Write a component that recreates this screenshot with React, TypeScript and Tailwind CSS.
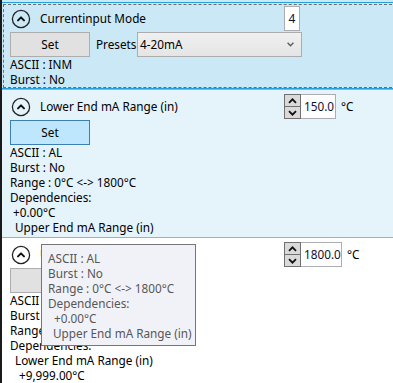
import React from 'react';

// Expand / collapse glyph (circle with up chevron)
function ExpandIcon() {
  return (
    <svg width="20" height="20" viewBox="0 0 20 20" className="shrink-0">
      <circle cx="10" cy="10" r="8.6" fill="none" stroke="#222" strokeWidth="1.3" />
      <path
        d="M7 11.4 L10 8.4 L13 11.4"
        fill="none"
        stroke="#111"
        strokeWidth="2"
        strokeLinecap="round"
        strokeLinejoin="round"
      />
    </svg>
  );
}

function SpinArrow({ up }: { up: boolean }) {
  return (
    <svg width="9" height="6" viewBox="0 0 9 6">
      <path
        d={up ? 'M1 4.8 L4.5 1.3 L8 4.8' : 'M1 1.2 L4.5 4.7 L8 1.2'}
        fill="none"
        stroke="#111"
        strokeWidth="1.8"
      />
    </svg>
  );
}

function SpinBox({ value, boxClass }: { value: string; boxClass: string }) {
  return (
    <div className={`flex h-[25px] border-y border-r border-[#abadb3] bg-white ${boxClass}`}>
      <div className="flex flex-col w-[17px] shrink-0 -my-px">
        <div className="h-[13px] flex items-center justify-center bg-[#dadada] border border-[#707070]">
          <SpinArrow up />
        </div>
        <div className="h-[12px] flex items-center justify-center bg-[#dadada] border border-t-0 border-[#707070]">
          <SpinArrow up={false} />
        </div>
      </div>
      <div className="pl-[3px] flex items-center text-[#101030]">{value}</div>
    </div>
  );
}

function Header({ title, children }: { title: string; children: React.ReactNode }) {
  return (
    <div className="flex items-center h-[25px] pl-[9px]">
      <ExpandIcon />
      <div className="ml-[9px] w-[244px] shrink-0 whitespace-nowrap">{title}</div>
      {children}
    </div>
  );
}

function SetButton({ hover }: { hover?: boolean }) {
  return (
    <button
      className={`w-[80px] h-[25px] shrink-0 border text-black ${
        hover ? 'bg-[#bee6fd] border-[#3c7fb1]' : 'bg-[#e1e1e1] border-[#adadad]'
      }`}
    >
      Set
    </button>
  );
}

export default function App() {
  return (
    <div className="relative w-[393px] h-[383px] overflow-hidden bg-white border-l-2 border-[#1a1a1a] font-['Noto_Sans',sans-serif] text-[11.75px] leading-[15px] text-black">
      <div className="h-[2px] bg-[#cbe8f6]" />

      {/* Selected item */}
      <div className="relative h-[87px] bg-[#cbe8f6] border-y border-[#26a0da]">
        <div className="mt-[3px]">
          <Header title="Currentinput Mode">
            <div className="w-[16px] h-[25px] border border-[#abadb3] bg-white flex items-center justify-center text-[12px] text-[#101030]">
              4
            </div>
          </Header>
        </div>
        <div className="mt-px flex items-center pl-[8px]">
          <SetButton />
          <span className="ml-[6px] w-[41px] shrink-0 whitespace-nowrap">Presets</span>
          <div className="w-[165px] h-[25px] flex items-center justify-between border border-[#acacac] bg-linear-to-b from-[#f0f0f0] to-[#e5e5e5] pl-[2px] pr-[7px]">
            <span>4-20mA</span>
            <svg width="7" height="5" viewBox="0 0 7 5">
              <path d="M0.6 0.8 L3.5 3.8 L6.4 0.8" fill="none" stroke="#5a5a5a" strokeWidth="1.3" />
            </svg>
          </div>
        </div>
        <div className="pl-[8px]">
          <div>ASCII : INM</div>
          <div>Burst : No</div>
        </div>
        {/* focus rectangle */}
        <div className="pointer-events-none absolute left-[1px] top-[1px] bottom-0 -right-[4px] border border-dashed border-[#6d6d6d]" />
      </div>

      {/* Hovered item */}
      <div className="h-[149px] bg-[#e5f3fb] border-y border-[#70c0e7]">
        <div className="mt-[4px]">
          <Header title="Lower End mA Range (in)">
            <SpinBox value="150.0" boxClass="w-[52px]" />
            <span className="ml-[5px]">°C</span>
          </Header>
        </div>
        <div className="mt-px pl-[8px]">
          <SetButton hover />
        </div>
        <div>
          <div className="pl-[8px]">ASCII : AL</div>
          <div className="pl-[8px]">Burst : No</div>
          <div className="pl-[8px]">Range : 0°C &lt;-&gt; 1800°C</div>
          <div className="pl-[8px]">Dependencies:</div>
          <div className="pl-[11px]">+0.00°C</div>
          <div className="pl-[13px]">Upper End mA Range (in)</div>
        </div>
      </div>

      {/* Plain item */}
      <div>
        <div className="mt-[4px]">
          <Header title="Upper End mA Range (in)">
            <SpinBox value="1800.0" boxClass="w-[58px]" />
            <span className="ml-[5px]">°C</span>
          </Header>
        </div>
        <div className="mt-px pl-[8px]">
          <SetButton />
        </div>
        <div>
          <div className="pl-[8px]">ASCII : AL</div>
          <div className="pl-[8px]">Burst : No</div>
          <div className="pl-[8px]">Range : 0°C &lt;-&gt; 1800°C</div>
          <div className="pl-[8px]">Dependencies:</div>
          <div className="pl-[13px]">Lower End mA Range (in)</div>
          <div className="pl-[17px]">+9,999.00°C</div>
        </div>
      </div>

      {/* Tooltip */}
      <div className="absolute left-[39px] top-[244px] w-[155px] h-[102px] bg-[#f1f2f7] border border-[#767676] pt-[6px] pl-[6px] text-[#575757]">
        <div>ASCII : AL</div>
        <div>Burst : No</div>
        <div>Range : 0°C &lt;-&gt; 1800°C</div>
        <div>Dependencies:</div>
        <div className="pl-[6px]">+0.00°C</div>
        <div className="pl-[5px]">Upper End mA Range (in)</div>
      </div>
    </div>
  );
}
